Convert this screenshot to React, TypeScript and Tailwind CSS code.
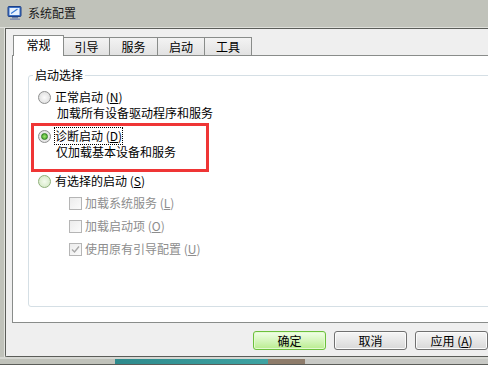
import React from "react";

const font = "font-['Noto_Sans_CJK_SC','Liberation_Sans',sans-serif]";

function Radio({ checked, hover }: { checked?: boolean; hover?: boolean }) {
  return (
    <span
      className={`flex h-[13px] w-[13px] shrink-0 items-center justify-center rounded-full border ${
        hover ? "border-[#8fb07a] bg-radial from-[#f4fbee] to-[#cfe6bf]" : "border-[#8e8f8f] bg-radial from-[#fbfbfb] to-[#d9d9d9]"
      }`}
    >
      {checked && (
        <span className="h-[7px] w-[7px] rounded-full border border-[#2f7d1f] bg-radial from-[#9be36d] to-[#38a323]" />
      )}
    </span>
  );
}

function Check({ checked }: { checked?: boolean }) {
  return (
    <span className="flex h-[13px] w-[13px] shrink-0 items-center justify-center border border-[#b5b5b5] bg-linear-to-br from-[#ececec] to-[#fbfbfb]">
      {checked && (
        <svg width="9" height="9" viewBox="0 0 9 9">
          <path d="M1 4.5 L3.5 7 L8 1.5" fill="none" stroke="#a8a8a8" strokeWidth="1.4" />
        </svg>
      )}
    </span>
  );
}

function Key({ k }: { k: string }) {
  return (
    <span>
      {" "}(<span className="underline underline-offset-1">{k}</span>)
    </span>
  );
}

export default function App() {
  const tabs = [
    { label: "引导", w: "w-[47px]" },
    { label: "服务", w: "w-[49px]" },
    { label: "启动", w: "w-[48px]" },
    { label: "工具", w: "w-[48px]" },
  ];

  return (
    <div className={`flex h-[365px] w-[488px] flex-col overflow-hidden bg-[#c0c2ba] text-[12px] text-black ${font}`}>
      {/* title bar */}
      <div className="flex h-[28px] shrink-0 items-center gap-[5px] border-b border-[#dfe0db] pb-[2px] pl-[7px]">
        <svg width="16" height="14" viewBox="0 0 16 14">
          <rect x="1" y="0.5" width="13" height="10" rx="1" fill="#3a6fc4" stroke="#1d3f85" />
          <rect x="2.5" y="2" width="10" height="7" fill="#e8f2ff" />
          <path d="M4 7.5 L10.5 3" stroke="#3a7bd5" strokeWidth="1.2" />
          <rect x="5" y="11" width="6" height="1.5" fill="#6b7fa8" />
          <rect x="3" y="12.5" width="10" height="1.5" fill="#8894b0" />
        </svg>
        <span className="text-[#1a1a1a]">系统配置</span>
      </div>

      <div className="flex shrink-0">
        <div className="w-[5px] shrink-0 border-r border-[#e2e3de]" />
        <div className="flex h-[329px] w-[600px] flex-col rounded-bl-[2px] border-t border-b border-l border-[#5b5d59] bg-[#efefef]">
          {/* tabs */}
          <div className="flex h-[26px] shrink-0 items-end pl-[7px]">
            <div className="relative z-10 -mb-px flex h-[21px] w-[51px] items-center justify-center border border-b-0 border-[#898c8a] bg-white pb-[2px]">
              常规
            </div>
            {tabs.map((t) => (
              <div
                key={t.label}
                className={`-ml-px flex h-[18px] ${t.w} items-center justify-center border border-b-0 border-[#898c8a] bg-linear-to-b from-[#f3f3f3] to-[#e2e2e2] pt-[1px]`}
              >
                {t.label}
              </div>
            ))}
          </div>

          {/* panel */}
          <div className="ml-[6px] h-[268px] w-[560px] shrink-0 border border-[#898c8a] bg-white">
            <fieldset className="ml-[15px] mt-[12px] h-[239px] w-[500px] rounded-[3px] border border-[#d5dfe5]">
              <legend className="ml-[4px] px-[2px] leading-[14px]">启动选择</legend>
              <div className="pt-[7px] leading-[16px]">
                <div className="pl-[9px]">
                  <div className="flex items-center gap-[4px]">
                    <Radio />
                    <span>
                      正常启动<Key k="N" />
                    </span>
                  </div>
                  <div className="pl-[19px]">加载所有设备驱动程序和服务</div>
                </div>

                <div className="ml-[2px] mt-[2px] w-[178px] border-[3px] border-[#ef3535] pb-[9px] pl-[4px] pt-[2px]">
                  <div className="flex items-center gap-[4px]">
                    <Radio checked />
                    <span className="outline-1 outline-dotted outline-black">
                      诊断启动<Key k="D" />
                    </span>
                  </div>
                  <div className="pl-[18px]">仅加载基本设备和服务</div>
                </div>

                <div className="mt-[1px] flex items-center gap-[4px] pl-[9px]">
                  <Radio hover />
                  <span>
                    有选择的启动<Key k="S" />
                  </span>
                </div>

                <div className="mt-[6px] flex flex-col gap-[7px] pl-[40px] text-[#8d8d8d]">
                  <div className="flex items-center gap-[3px]">
                    <Check />
                    <span>
                      加载系统服务<Key k="L" />
                    </span>
                  </div>
                  <div className="flex items-center gap-[3px]">
                    <Check />
                    <span>
                      加载启动项<Key k="O" />
                    </span>
                  </div>
                  <div className="flex items-center gap-[3px]">
                    <Check checked />
                    <span>
                      使用原有引导配置<Key k="U" />
                    </span>
                  </div>
                </div>
              </div>
            </fieldset>
          </div>

          {/* buttons */}
          <div className="mt-[8px] flex gap-[8px] pl-[247px]">
            <button className="h-[19px] w-[73px] rounded-[3px] border border-[#6cc03c] bg-linear-to-b from-[#f2ffe8] to-[#b9ec8f] leading-[17px] shadow-[inset_0_0_0_1px_#e3fbd0]">
              确定
            </button>
            <button className="h-[19px] w-[73px] rounded-[3px] border border-[#707070] bg-linear-to-b from-[#f6f6f6] to-[#d8d8d8] leading-[17px] shadow-[inset_0_0_0_1px_#fbfbfb]">
              取消
            </button>
            <button className="h-[19px] w-[73px] rounded-[3px] border border-[#707070] bg-linear-to-b from-[#f6f6f6] to-[#d8d8d8] leading-[17px] shadow-[inset_0_0_0_1px_#fbfbfb]">
              应用<Key k="A" />
            </button>
          </div>
        </div>
      </div>

      {/* bottom frame */}
      <div className="flex h-[8px] shrink-0 flex-col">
        <div className="h-[2px] bg-[#d6d7d2]" />
        <div className="flex h-[5px]">
          <div className="w-[115px] bg-[#c0c2ba]" />
          <div className="w-[153px] bg-linear-to-r from-[#2e8a8c] to-[#3ea3a2]" />
          <div className="w-[37px] bg-[#8e7c6b]" />
          <div className="flex-1 bg-[#c8c9c5]" />
        </div>
        <div className="h-[1px] bg-[#5b5d59]" />
      </div>
    </div>
  );
}
